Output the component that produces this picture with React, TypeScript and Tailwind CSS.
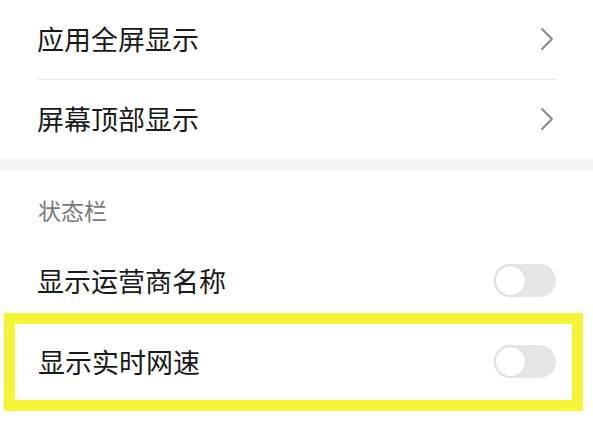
import React from "react";

const font = { fontFamily: '"Noto Sans CJK SC", "Noto Sans", sans-serif' };

const Chevron = () => (
  <svg width="14" height="24" viewBox="0 0 14 24" fill="none">
    <path d="M2 2 L12 12 L2 22" stroke="#8a8a8a" strokeWidth="2" strokeLinecap="round" strokeLinejoin="round" />
  </svg>
);

const Toggle = () => (
  <div className="relative w-[62px] h-[33px] rounded-full bg-[#e6e6e6]">
    <div className="absolute left-0 top-0 w-[33px] h-[33px] rounded-full bg-white border-2 border-[#e0e0e0]" />
  </div>
);

// link row with chevron
const NavRow = ({ label, divider }: { label: string; divider?: boolean }) => (
  <div className={`mx-[37px] flex items-center justify-between ${divider ? "h-[80px] pb-[2px] border-b border-[#e8e8e8]" : "h-[79px] pb-[2px]"}`}>
    <span className="text-[27px] text-[#1a1a1a] leading-none">{label}</span>
    <span className="mr-[2px] flex items-center">
      <Chevron />
    </span>
  </div>
);

export default function App() {
  return (
    <div className="w-[593px] h-[437px] bg-white overflow-hidden" style={font}>
      <NavRow label="应用全屏显示" divider />
      <NavRow label="屏幕顶部显示" />
      <div className="h-[12px] bg-[#f5f5f5]" />
      <div className="h-[78px] px-[38px] flex items-center">
        <span className="text-[23px] text-[#7a7a7a] leading-none">状态栏</span>
      </div>
      <div className="h-[64px] px-[37px] flex items-center justify-between pb-[2px]">
        <span className="text-[27px] text-[#1a1a1a] leading-none">显示运营商名称</span>
        <Toggle />
      </div>
      <div className="ml-[4px] w-[579px] h-[98px] border-[11px] border-[#f3f536] flex items-center justify-between pl-[23px] pr-[16px] pb-[2px]">
        <span className="text-[27px] text-[#1a1a1a] leading-none">显示实时网速</span>
        <Toggle />
      </div>
    </div>
  );
}
